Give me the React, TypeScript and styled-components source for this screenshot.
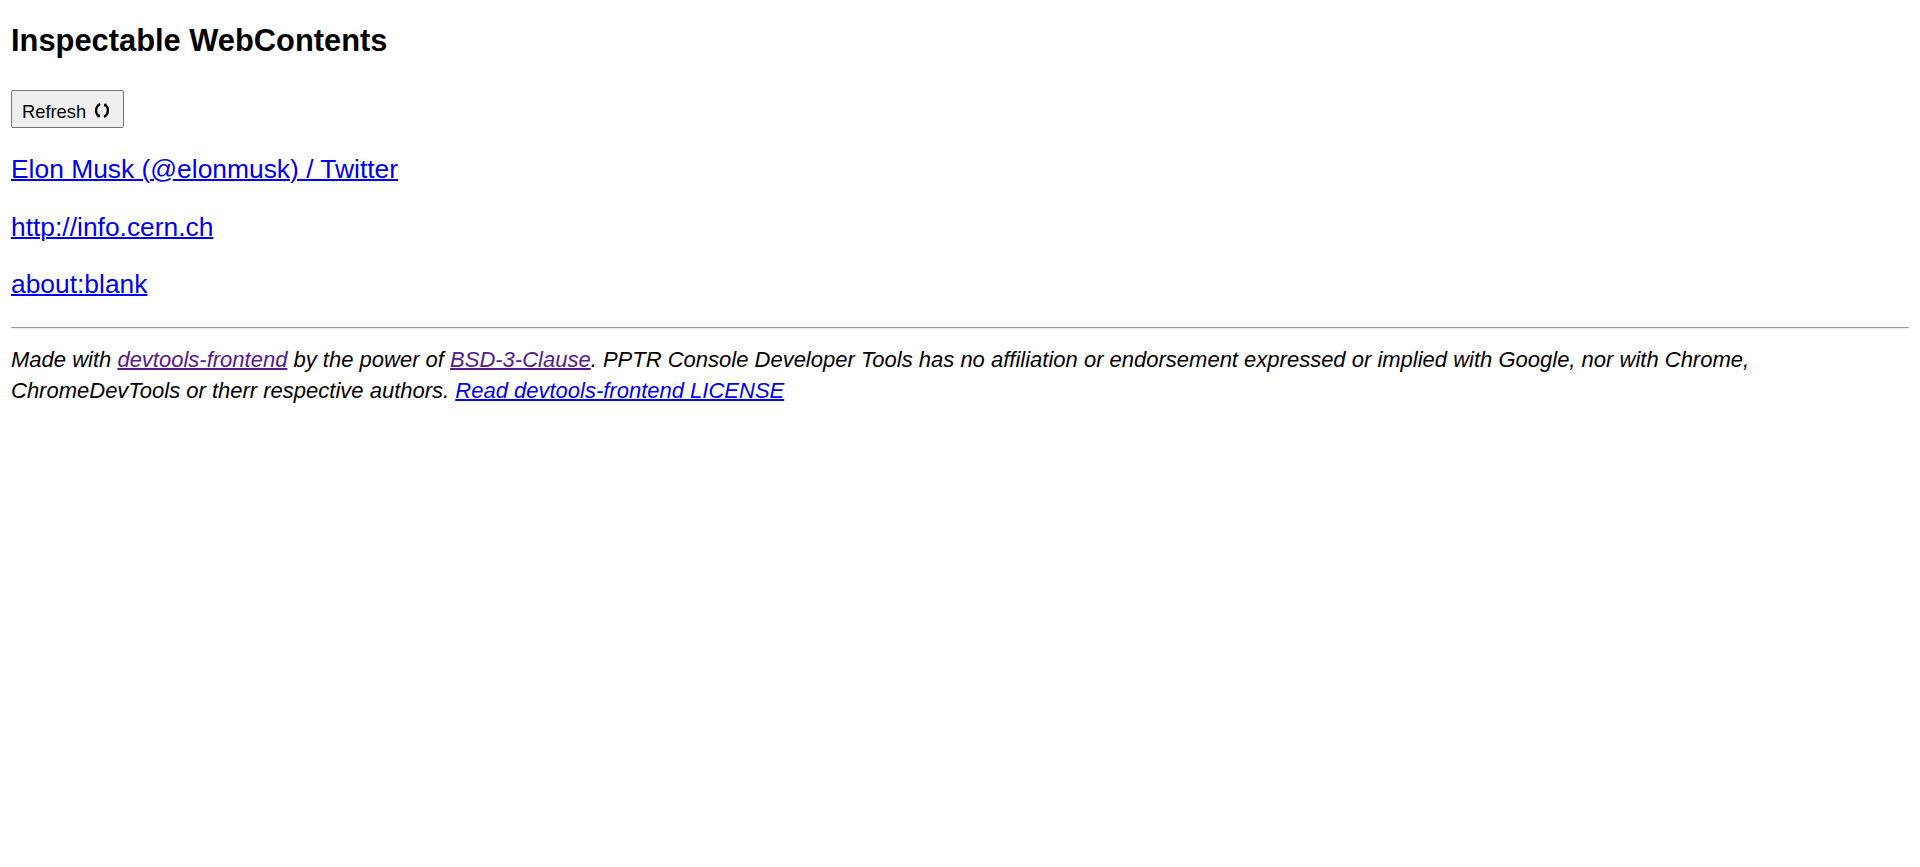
import React from "react";
import styled, { createGlobalStyle } from "styled-components";

interface Target {
    title: string;
    visited?: boolean;
}

const targets: Target[] = [
    { title: "Elon Musk (@elonmusk) / Twitter" },
    { title: "http://info.cern.ch" },
    { title: "about:blank" },
];

const GlobalStyle = createGlobalStyle`
body {
    margin: 0;
    background: #fff;
    color: #000;
    font-family: "Liberation Sans", Arial, sans-serif;
}
`;

const Page = styled.main`
display: flex;
flex-direction: column;
align-items: flex-start;
padding: 21px 11px 0;
`;

const Title = styled.h1`
margin: 0;
font-size: 30.85px;
line-height: 40px;
`;

const RefreshButton = styled.button`
display: flex;
align-items: center;
gap: 9px;
width: 113px;
height: 38px;
margin-top: 29px;
padding: 5px 10px 0;
border: 1px solid #767676;
border-radius: 2px;
background: #efefef;
color: #000;
font-family: inherit;
font-size: 18.33px;
cursor: pointer;
`;

const TargetList = styled.div`
display: flex;
flex-direction: column;
align-items: flex-start;
gap: 26.4px;
margin-top: 26.2px;
font-size: 26.4px;
line-height: 31px;
`;

const Link = styled.a<{ $visited?: boolean }>`
color: ${({ $visited }) => ($visited ? "#551a8b" : "#0000ee")};
text-decoration: underline;
text-decoration-thickness: 2px;
`;

const Divider = styled.hr`
width: 100%;
height: 1px;
margin: 27px 0 0;
border: none;
border-top: 1px solid #9a9a9a;
background: #ededed;
`;

const Footer = styled.footer`
margin-top: 15px;
font-size: 22px;
font-style: italic;
line-height: 31px;
`;

const Icon = styled.svg`
flex: none;
margin-bottom: 3px;
`;

const RefreshIcon = () => (
    <Icon width="14" height="15" viewBox="0 0 14 15" fill="none" stroke="#000" strokeWidth="2.3">
        <path d="M5 1C0.2 3.5 0 10 3.5 13" />
        <path d="M9 14C13.8 11.5 14 5 10.5 2" />
        <path d="M1.8 14.2H5V11Z" fill="#000" stroke="none" />
        <path d="M12.2 0.8H9V4Z" fill="#000" stroke="none" />
    </Icon>
);

const App = () => {
    return (
        <>
            <GlobalStyle />
            <Page>
                <Title>Inspectable WebContents</Title>
                <RefreshButton>
                    Refresh <RefreshIcon />
                </RefreshButton>
                <TargetList>
                    {targets.map((target) => (
                        <Link key={target.title} href="#" $visited={target.visited}>
                            {target.title}
                        </Link>
                    ))}
                </TargetList>
                <Divider />
                <Footer>
                    Made with <Link href="#" $visited>devtools-frontend</Link> by the power of{" "}
                    <Link href="#" $visited>BSD-3-Clause</Link>. PPTR Console Developer Tools has no
                    affiliation or endorsement expressed or implied with Google, nor with Chrome,
                    ChromeDevTools or therr respective authors.{" "}
                    <Link href="#">Read devtools-frontend LICENSE</Link>
                </Footer>
            </Page>
        </>
    );
};

export default App;
